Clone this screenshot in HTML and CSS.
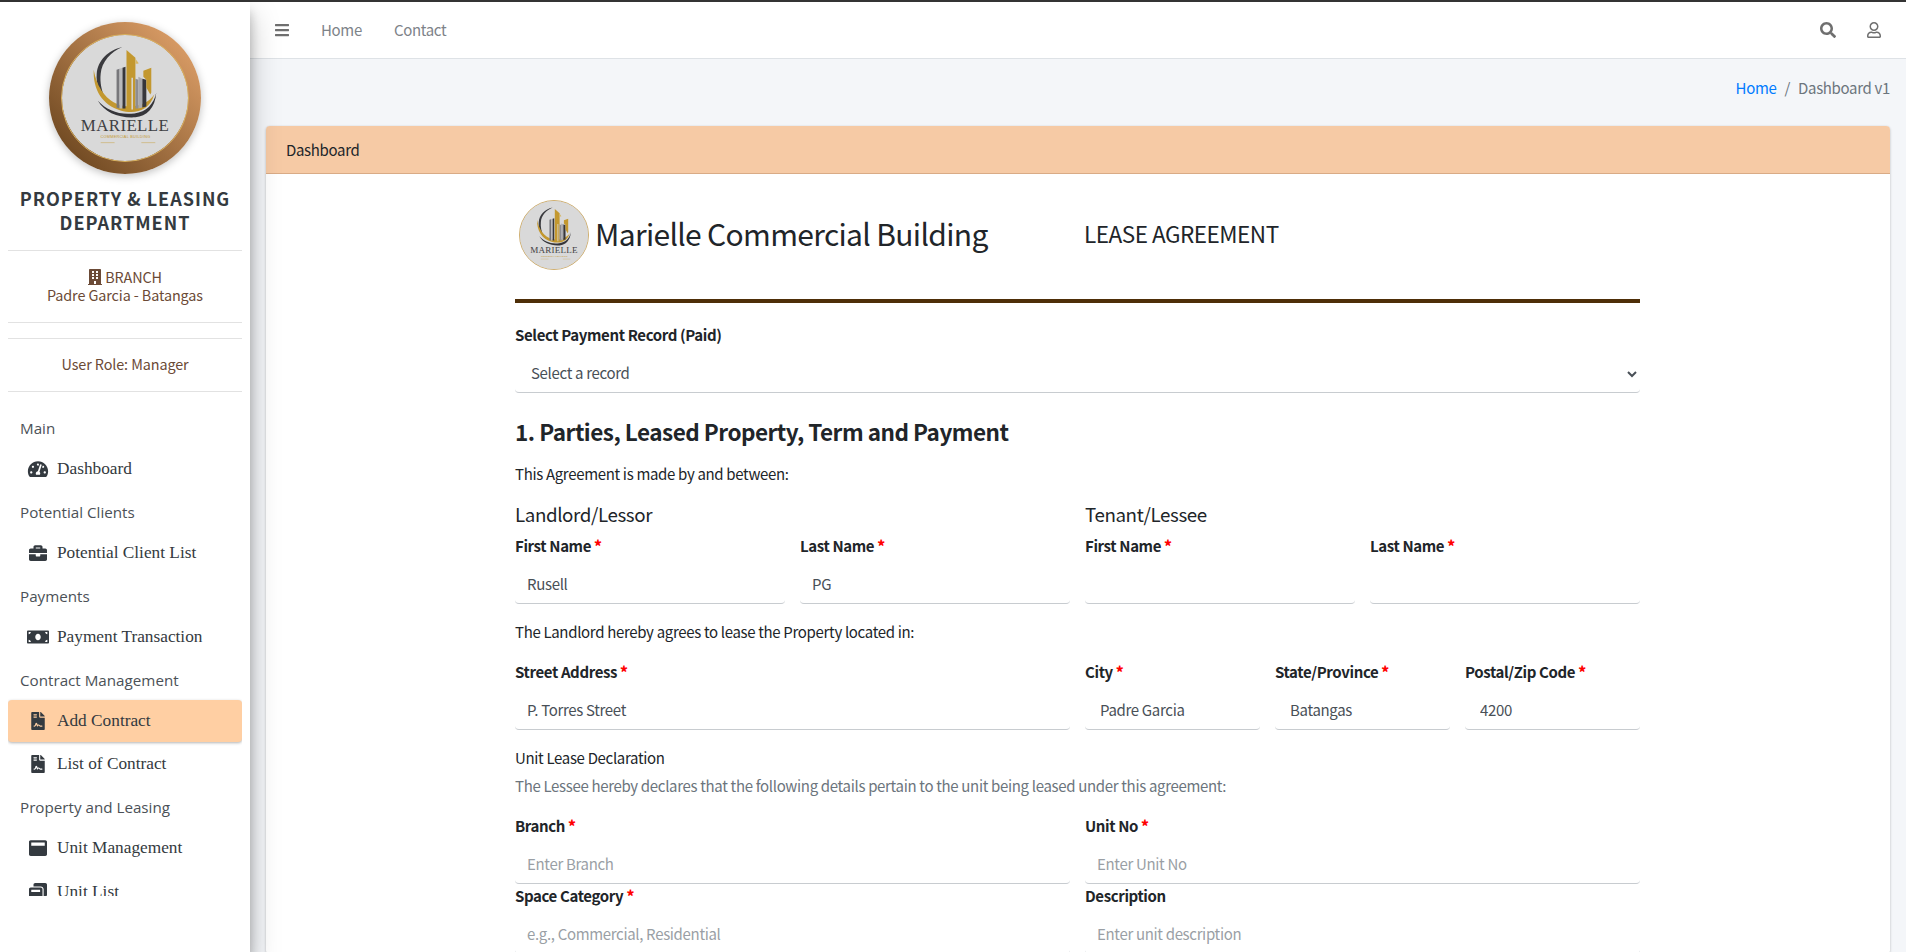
FILE: index.html
```html
<!DOCTYPE html>
<html lang="en">
<head>
  <meta charset="UTF-8">
  <meta name="viewport" content="width=device-width, initial-scale=1.0">
  <title>Lease Agreement</title>
  <link rel="stylesheet" href="styles.css">
</head>
<body>
  <svg class="icon-defs" aria-hidden="true">
    <symbol id="i-bars" viewBox="0 0 448 512"><path d="M16 132h416c8.837 0 16-7.163 16-16V76c0-8.837-7.163-16-16-16H16C7.163 60 0 67.163 0 76v40c0 8.837 7.163 16 16 16zm0 160h416c8.837 0 16-7.163 16-16v-40c0-8.837-7.163-16-16-16H16c-8.837 0-16 7.163-16 16v40c0 8.837 7.163 16 16 16zm0 160h416c8.837 0 16-7.163 16-16v-40c0-8.837-7.163-16-16-16H16c-8.837 0-16 7.163-16 16v40c0 8.837 7.163 16 16 16z"/></symbol>
    <symbol id="i-search" viewBox="0 0 512 512"><path d="M505 442.7L405.3 343c-4.5-4.5-10.6-7-17-7H372c27.6-35.3 44-79.7 44-128C416 93.1 322.9 0 208 0S0 93.1 0 208s93.1 208 208 208c48.3 0 92.7-16.4 128-44v16.3c0 6.4 2.5 12.5 7 17l99.7 99.7c9.4 9.4 24.6 9.4 33.9 0l28.3-28.3c9.4-9.4 9.4-24.6.1-34zM208 336c-70.7 0-128-57.2-128-128 0-70.7 57.2-128 128-128 70.7 0 128 57.2 128 128 0 70.7-57.2 128-128 128z"/></symbol>
    <symbol id="i-user" viewBox="0 0 448 512"><path d="M313.6 304c-28.7 0-42.5 16-89.6 16-47.1 0-60.8-16-89.6-16C60.2 304 0 364.2 0 438.4V464c0 26.5 21.5 48 48 48h352c26.5 0 48-21.5 48-48v-25.6c0-74.2-60.2-134.4-134.4-134.4zM400 464H48v-25.6c0-47.6 38.8-86.4 86.4-86.4 14.6 0 38.3 16 89.6 16 51.7 0 74.9-16 89.6-16 47.6 0 86.4 38.8 86.4 86.4V464zM224 288c79.5 0 144-64.5 144-144S303.5 0 224 0 80 64.5 80 144s64.5 144 144 144zm0-240c52.9 0 96 43.1 96 96s-43.1 96-96 96-96-43.1-96-96 43.1-96 96-96z"/></symbol>
    <symbol id="i-building" viewBox="0 0 448 512"><path d="M436 480h-20V24c0-13.255-10.745-24-24-24H56C42.745 0 32 10.745 32 24v456H12c-6.627 0-12 5.373-12 12v20h448v-20c0-6.627-5.373-12-12-12zM128 76c0-6.627 5.373-12 12-12h40c6.627 0 12 5.373 12 12v40c0 6.627-5.373 12-12 12h-40c-6.627 0-12-5.373-12-12V76zm0 96c0-6.627 5.373-12 12-12h40c6.627 0 12 5.373 12 12v40c0 6.627-5.373 12-12 12h-40c-6.627 0-12-5.373-12-12v-40zm52 148h-40c-6.627 0-12-5.373-12-12v-40c0-6.627 5.373-12 12-12h40c6.627 0 12 5.373 12 12v40c0 6.627-5.373 12-12 12zm76 160h-64v-84c0-6.627 5.373-12 12-12h40c6.627 0 12 5.373 12 12v84zm64-172c0 6.627-5.373 12-12 12h-40c-6.627 0-12-5.373-12-12v-40c0-6.627 5.373-12 12-12h40c6.627 0 12 5.373 12 12v40zm0-96c0 6.627-5.373 12-12 12h-40c-6.627 0-12-5.373-12-12v-40c0-6.627 5.373-12 12-12h40c6.627 0 12 5.373 12 12v40zm0-96c0 6.627-5.373 12-12 12h-40c-6.627 0-12-5.373-12-12V76c0-6.627 5.373-12 12-12h40c6.627 0 12 5.373 12 12v40z"/></symbol>
    <symbol id="i-gauge" viewBox="0 0 576 512"><path d="M288 32C128.94 32 0 160.94 0 320c0 52.8 14.25 102.26 39.06 144.8 5.61 9.62 16.3 15.2 27.44 15.2h443c11.14 0 21.83-5.58 27.44-15.2C561.75 422.26 576 372.8 576 320c0-159.06-128.94-288-288-288zm0 64c14.71 0 26.58 10.13 30.32 23.65-1.11 2.26-2.64 4.23-3.45 6.67l-9.22 27.67c-5.13 3.49-10.97 6.01-17.64 6.01-17.67 0-32-14.33-32-32S270.33 96 288 96zM96 384c-17.67 0-32-14.33-32-32s14.33-32 32-32 32 14.33 32 32-14.33 32-32 32zm48-160c-17.67 0-32-14.33-32-32s14.33-32 32-32 32 14.33 32 32-14.33 32-32 32zm246.77-72.41l-61.33 184C343.13 347.33 352 364.54 352 384c0 11.72-3.38 22.55-8.88 32H232.88c-5.5-9.45-8.88-20.28-8.88-32 0-33.94 26.5-61.43 59.9-63.59l61.34-184.01c4.17-12.56 17.73-19.45 30.36-15.17 12.57 4.19 19.35 17.79 15.17 30.36zm14.66 57.2l15.52-46.55c3.47-1.29 7.13-2.23 11.05-2.23 17.67 0 32 14.33 32 32s-14.33 32-32 32c-11.38-.01-20.89-6.27-26.57-15.22zM480 384c-17.67 0-32-14.33-32-32s14.33-32 32-32 32 14.33 32 32-14.33 32-32 32z"/></symbol>
    <symbol id="i-briefcase" viewBox="0 0 512 512"><path d="M320 336c0 8.84-7.16 16-16 16h-96c-8.84 0-16-7.16-16-16v-48H0v144c0 25.6 22.4 48 48 48h416c25.6 0 48-22.4 48-48V288H320v48zm144-208h-80V80c0-25.6-22.4-48-48-48H176c-25.6 0-48 22.4-48 48v48H48c-25.6 0-48 22.4-48 48v80h512v-80c0-25.6-22.4-48-48-48zm-144 0H192V96h128v32z"/></symbol>
    <symbol id="i-money" viewBox="0 0 640 512"><path d="M608 64H32C14.33 64 0 78.33 0 96v320c0 17.67 14.33 32 32 32h576c17.67 0 32-14.33 32-32V96c0-17.67-14.33-32-32-32zM48 400v-64c35.35 0 64 28.65 64 64H48zm0-224v-64h64c0 35.35-28.65 64-64 64zm272 176c-44.19 0-80-42.99-80-96 0-53.02 35.82-96 80-96s80 42.98 80 96c0 53.03-35.83 96-80 96zm272 48h-64c0-35.35 28.65-64 64-64v64zm0-224c-35.35 0-64-28.65-64-64h64v64z"/></symbol>
    <symbol id="i-contract" viewBox="0 0 384 512"><path d="M224 136V0H24C10.7 0 0 10.7 0 24v464c0 13.3 10.7 24 24 24h336c13.3 0 24-10.7 24-24V160H248c-13.2 0-24-10.8-24-24zM64 72c0-4.42 3.58-8 8-8h80c4.42 0 8 3.58 8 8v16c0 4.42-3.58 8-8 8H72c-4.42 0-8-3.58-8-8V72zm0 64c0-4.42 3.58-8 8-8h80c4.42 0 8 3.58 8 8v16c0 4.42-3.58 8-8 8H72c-4.42 0-8-3.58-8-8v-16zm192.81 248H304c8.84 0 16 7.16 16 16s-7.16 16-16 16h-47.19c-16.45 0-31.27-9.14-38.64-23.86-2.95-5.92-8.09-6.52-10.17-6.52s-7.22.59-10.02 6.19l-7.67 15.34a15.986 15.986 0 0 1-14.31 8.84c-.38 0-.75-.02-1.14-.05-6.45-.45-12-4.75-14.03-10.89L144 354.59l-10.61 31.88c-5.89 17.66-22.38 29.53-41 29.53H80c-8.84 0-16-7.16-16-16s7.16-16 16-16h12.39c4.83 0 9.11-3.08 10.64-7.66l18.19-54.64c3.3-9.81 12.44-16.41 22.78-16.41s19.48 6.59 22.77 16.41l13.88 41.64c19.77-16.19 54.05-9.7 66 14.16 2.02 4.06 5.96 6.5 10.16 6.5zM377 105L279.1 7c-4.5-4.5-10.6-7-17-7H256v128h128v-6.1c0-6.3-2.5-12.4-7-16.9z"/></symbol>
    <symbol id="i-window" viewBox="0 0 512 512"><path d="M464 32H48C21.5 32 0 53.5 0 80v352c0 26.5 21.5 48 48 48h416c26.5 0 48-21.5 48-48V80c0-26.5-21.5-48-48-48zm-16 160H64v-84c0-6.6 5.4-12 12-12h360c6.6 0 12 5.4 12 12v84z"/></symbol>
    <symbol id="i-windows" viewBox="0 0 512 512"><path d="M512 48v288c0 26.5-21.5 48-48 48h-48V176c0-44.1-35.9-80-80-80H128V48c0-26.5 21.5-48 48-48h288c26.5 0 48 21.5 48 48zM384 176v288c0 26.5-21.5 48-48 48H48c-26.5 0-48-21.5-48-48V176c0-26.5 21.5-48 48-48h288c26.5 0 48 21.5 48 48zm-68 28c0-6.6-5.4-12-12-12H76c-6.6 0-12 5.4-12 12v52h252v-52z"/></symbol>

    <!-- company mark, drawn on a 127 box -->
    <symbol id="logo-mark" viewBox="0 0 127 127">
      <circle cx="63.500" cy="63.500" r="63.500" fill="#d9d9d9"/>
      <path d="M61 12C46 15 36 26 35 39c-1 10 3 19 9 26-4-8-6-17-5-26 1-12 10-22 22-27z" fill="#3a3a3e"/>
      <path d="M32 35c-1 20 9 36 27 41 14 4 29 1 34-16-7 10-20 14-33 11C45 67 35 53 32 35z" fill="#c3982f"/>
      <path d="M36 66c7 12 21 18 38 17 11-1 20-9 21-25-2 11-10 20-22 21-15 2-28-3-37-13z" fill="#35353a"/>
      <path d="M55 35l3-1v40l-3-1z" fill="#77777b"/>
      <path d="M58 34l3-1v41h-3z" fill="#b9b9bb"/>
      <path d="M61 33l3-1v42h-3z" fill="#36363b"/>
      <path d="M65 15l9 8v52l-9 1z" fill="#c3982f"/>
      <path d="M70 43h1.500v32H70z" fill="#d9d9d9"/>
      <path d="M74 24l3 4v1h-3z" fill="#d6b767"/>
      <path d="M74 44l3 1v29h-3z" fill="#8d8d91"/>
      <path d="M77 42l4 2v29l-4 1z" fill="#a9a9ac"/>
      <path d="M81 44l4 1v27l-4 1z" fill="#36363b"/>
      <path d="M82 36l8-3v25l-1 2-4-7v-8l-3-3z" fill="#c3982f"/>
      <text x="63.500" y="97" class="logo-name">MARIELLE</text>
      <text x="64" y="104" class="logo-sub">COMMERCIAL BUILDING</text>
      <path d="M39 108.500h14M80 108.500h14" stroke="#c9aa5c" stroke-width=".6"/>
    </symbol>
  </svg>

  <div class="app">
    <aside class="sidebar">
      <div class="brand">
        <div class="brand-ring">
          <svg class="brand-mark"><use href="#logo-mark"/></svg>
        </div>
        <h2 class="brand-title">PROPERTY &amp; LEASING DEPARTMENT</h2>
      </div>
      <div class="side-info side-branch">
        <div><svg class="icon-inline"><use href="#i-building"/></svg> BRANCH</div>
        <div>Padre Garcia - Batangas</div>
      </div>
      <div class="side-info side-role">User Role: Manager</div>

      <nav class="side-nav">
        <div class="nav-heading">Main</div>
        <a class="nav-item"><svg class="nav-icon"><use href="#i-gauge"/></svg>Dashboard</a>
        <div class="nav-heading">Potential Clients</div>
        <a class="nav-item"><svg class="nav-icon"><use href="#i-briefcase"/></svg>Potential Client List</a>
        <div class="nav-heading">Payments</div>
        <a class="nav-item"><svg class="nav-icon"><use href="#i-money"/></svg>Payment Transaction</a>
        <div class="nav-heading">Contract Management</div>
        <a class="nav-item active"><svg class="nav-icon"><use href="#i-contract"/></svg>Add Contract</a>
        <a class="nav-item"><svg class="nav-icon"><use href="#i-contract"/></svg>List of Contract</a>
        <div class="nav-heading">Property and Leasing</div>
        <a class="nav-item"><svg class="nav-icon"><use href="#i-window"/></svg>Unit Management</a>
        <a class="nav-item"><svg class="nav-icon"><use href="#i-windows"/></svg>Unit List</a>
      </nav>
    </aside>

    <div class="main">
      <header class="topbar">
        <svg class="top-icon bars"><use href="#i-bars"/></svg>
        <a class="top-link">Home</a>
        <a class="top-link">Contact</a>
        <div class="top-right">
          <svg class="top-icon"><use href="#i-search"/></svg>
          <svg class="top-icon"><use href="#i-user"/></svg>
        </div>
      </header>

      <div class="content">
        <div class="breadcrumb">
          <a>Home</a><span class="crumb-sep">/</span><span class="crumb-now">Dashboard v1</span>
        </div>

        <section class="card">
          <div class="card-header">Dashboard</div>
          <div class="card-body">
            <form class="lease">
              <div class="lease-head">
                <div class="lease-logo"><svg class="lease-mark"><use href="#logo-mark"/></svg></div>
                <h1 class="lease-company">Marielle Commercial Building</h1>
                <div class="lease-title">LEASE AGREEMENT</div>
              </div>

              <label class="field-label">Select Payment Record (Paid)</label>
              <select class="field select-field">
                <option>Select a record</option>
              </select>

              <h3 class="section-title">1. Parties, Leased Property, Term and Payment</h3>
              <p class="line first-line">This Agreement is made by and between:</p>

              <div class="grid party-row">
                <div class="span-6 party-name">Landlord/Lessor</div>
                <div class="span-6 party-name">Tenant/Lessee</div>
              </div>
              <div class="grid">
                <div class="span-3"><label class="field-label">First Name <b class="req">*</b></label><input class="field" value="Rusell"></div>
                <div class="span-3"><label class="field-label">Last Name <b class="req">*</b></label><input class="field" value="PG"></div>
                <div class="span-3"><label class="field-label">First Name <b class="req">*</b></label><input class="field"></div>
                <div class="span-3"><label class="field-label">Last Name <b class="req">*</b></label><input class="field"></div>
              </div>

              <p class="line">The Landlord hereby agrees to lease the Property located in:</p>

              <div class="grid">
                <div class="span-6"><label class="field-label">Street Address <b class="req">*</b></label><input class="field" value="P. Torres Street"></div>
                <div class="span-2"><label class="field-label">City <b class="req">*</b></label><input class="field wide-pad" value="Padre Garcia"></div>
                <div class="span-2"><label class="field-label">State/Province <b class="req">*</b></label><input class="field wide-pad" value="Batangas"></div>
                <div class="span-2"><label class="field-label">Postal/Zip Code <b class="req">*</b></label><input class="field wide-pad" value="4200"></div>
              </div>

              <p class="line">Unit Lease Declaration</p>
              <p class="line note">The Lessee hereby declares that the following details pertain to the unit being leased under this agreement:</p>

              <div class="grid unit-row">
                <div class="span-6"><label class="field-label">Branch <b class="req">*</b></label><input class="field" placeholder="Enter Branch"></div>
                <div class="span-6"><label class="field-label">Unit No <b class="req">*</b></label><input class="field" placeholder="Enter Unit No"></div>
              </div>
              <div class="grid">
                <div class="span-6"><label class="field-label">Space Category <b class="req">*</b></label><input class="field" placeholder="e.g., Commercial, Residential"></div>
                <div class="span-6"><label class="field-label">Description</label><input class="field" placeholder="Enter unit description"></div>
              </div>
            </form>
          </div>
        </section>
      </div>
    </div>
  </div>
</body>
</html>
```

FILE: styles.css
```css
* {
  box-sizing: border-box;
}

html, body {
  height: 100%;
}

body {
  margin: 0;
  overflow: hidden;
  font-family: "Noto Sans CJK SC", "Open Sans", sans-serif;
  font-size: 15px;
  letter-spacing: -0.33px;
  line-height: 24px;
  color: #212529;
  background: #f4f6f9;
}

.icon-defs {
  display: none;
}

.app {
  display: flex;
  height: 100%;
  border-top: 2px solid #343434;
}

/* sidebar */
.sidebar {
  flex: 0 0 250px;
  display: flex;
  flex-direction: column;
  height: 100%;
  padding: 0 8px;
  background: #fff;
  box-shadow: 0 14px 28px rgba(0, 0, 0, 0.25), 0 10px 10px rgba(0, 0, 0, 0.22);
  position: relative;
  z-index: 5;
}

.brand {
  padding-top: 20px;
  text-align: center;
  border-bottom: 1px solid #e2e2e2;
}

.brand-ring {
  width: 152px;
  height: 152px;
  margin: 0 auto;
  padding: 12px;
  border-radius: 50%;
  background: linear-gradient(45deg, #5f3c17, #eaa970);
  box-shadow: 0 2px 8px rgba(0, 0, 0, 0.25);
}

.brand-mark {
  display: block;
  width: 128px;
  height: 128px;
  border-radius: 50%;
  border: 1px solid #d8b25f;
}

.brand-title {
  margin: 12px -4px 16px;
  font-size: 18px;
  line-height: 24px;
  font-weight: 700;
  letter-spacing: 1px;
  color: #343a40;
}

.side-info {
  text-align: center;
  color: #6b4a36;
  font-size: 14.400px;
  letter-spacing: -0.1px;
  line-height: 18px;
  border-bottom: 1px solid #e2e2e2;
}

.side-branch {
  padding: 17px 0 18px;
  margin-bottom: 15px;
}

.side-role {
  padding: 16px 0 18px;
  border-top: 1px solid #e2e2e2;
}

.icon-inline {
  display: inline-block;
  width: 14px;
  height: 16px;
  fill: #6b4a36;
  vertical-align: -2px;
}

.side-nav {
  flex: 1;
  min-height: 0;
  margin-bottom: 56px;
  overflow: hidden;
  padding-top: 13px;
}

.nav-heading {
  padding-left: 12px;
  font-family: "Open Sans", sans-serif;
  font-size: 15.200px;
  letter-spacing: 0;
  line-height: 24px;
  color: #4b5157;
  height: 24px;
  margin: 11px 0 9px;
}

.nav-item {
  display: flex;
  align-items: center;
  height: 40px;
  padding-left: 19px;
  margin-bottom: 4px;
  font-family: "Liberation Serif", serif;
  font-size: 17.300px;
  letter-spacing: 0;
  color: #343a40;
  border-radius: 4px;
}

.nav-item.active {
  height: 42px;
  margin-top: -1px;
  margin-bottom: 2px;
  background: #ffcfa3;
  box-shadow: 0 1px 3px rgba(0, 0, 0, 0.3);
}

.nav-icon {
  flex: 0 0 22px;
  width: 22px;
  height: 18px;
  margin-right: 8px;
  fill: #343a40;
}

/* top bar */
.main {
  flex: 1;
  min-width: 0;
  display: flex;
  flex-direction: column;
}

.topbar {
  flex: 0 0 57px;
  display: flex;
  align-items: center;
  padding: 0 16px 0 24px;
  background: #fff;
  border-bottom: 1px solid #dee2e6;
}

.top-icon {
  width: 16px;
  height: 16px;
  fill: #6f6f6f;
}

.bars {
  margin-right: 31px;
}

.top-link {
  margin-right: 32px;
  color: #7e8389;
}

.top-right {
  margin-left: auto;
  display: flex;
  gap: 30px;
  padding-right: 8px;
}

/* content */
.content {
  flex: 1;
  min-height: 0;
  padding: 0 16px;
  overflow: hidden;
}

.breadcrumb {
  display: flex;
  justify-content: flex-end;
  padding: 17px 0 0 0;
  height: 67px;
  color: #6c757d;
}

.breadcrumb a {
  color: #007bff;
}

.crumb-sep {
  padding: 0 8px;
}

.card {
  background: #fff;
  border-radius: 4px;
  box-shadow: 0 0 1px rgba(0, 0, 0, 0.13), 0 1px 3px rgba(0, 0, 0, 0.2);
}

.card-header {
  height: 48px;
  padding: 0 20px;
  line-height: 47px;
  background: #f6caa5;
  border-bottom: 1px solid #d9ab86;
  border-radius: 4px 4px 0 0;
}

.card-body {
  padding: 26px 0 0 249px;
}

.lease {
  width: 1125px;
}

.lease-head {
  display: flex;
  align-items: center;
  height: 103px;
  padding: 0 0 29px 4px;
  margin-bottom: 20px;
  border-bottom: 4px solid #4e2e08;
}

.lease-logo {
  flex: 0 0 70px;
  height: 70px;
  border-radius: 50%;
  border: 1px solid #cfae6e;
  background: #d9d9d9;
}

.lease-mark {
  display: block;
  width: 68px;
  height: 68px;
}

.lease-company {
  flex: 0 0 489px;
  margin: 0 0 4px 6px;
  font-size: 30px;
  letter-spacing: -0.67px;
  line-height: 40px;
  font-weight: 400;
}

.lease-title {
  margin-bottom: 4px;
  font-size: 22.500px;
  letter-spacing: -0.48px;
  line-height: 30px;
}

.field-label {
  display: block;
  height: 24px;
  margin-bottom: 8px;
  font-weight: 700;
  letter-spacing: -0.38px;
}

.req {
  color: #ff0000;
}

.field {
  display: block;
  width: 100%;
  height: 38px;
  padding: 0 12px 2px;
  border: 0;
  border-bottom: 1px solid #c8ccd0;
  border-radius: 4px;
  background: #fff;
  font-family: inherit;
  font-size: 15px;
  letter-spacing: inherit;
  color: #495057;
  outline: 0;
}

.field::placeholder {
  color: #9a9fa5;
}

.wide-pad {
  padding-left: 15px;
}

.section-title {
  margin: 24px 0 15px;
  height: 30px;
  font-size: 22.500px;
  letter-spacing: -0.5px;
  line-height: 29px;
  font-weight: 700;
}

.line {
  margin: 16px 0 0;
}

.first-line {
  margin-top: 0;
}

.note {
  margin-top: 4px;
  color: #6c757d;
}

.grid {
  display: grid;
  grid-template-columns: repeat(12, 1fr);
  column-gap: 15px;
}

.party-row {
  margin: 16px 0 8px;
}

.party-name {
  font-size: 18.750px;
  letter-spacing: -0.4px;
  line-height: 24px;
}

.line + .grid {
  margin-top: 16px;
}

.span-2 {
  grid-column: span 2;
}

.span-3 {
  grid-column: span 3;
}

.span-6 {
  grid-column: span 6;
}

/* logo lettering */
.logo-name {
  font-family: "Liberation Serif", serif;
  font-size: 17px;
  letter-spacing: 0.4px;
  text-anchor: middle;
  fill: #3f3f43;
}

.logo-sub {
  font-family: "Liberation Sans", sans-serif;
  font-size: 3.800px;
  letter-spacing: 0.3px;
  text-anchor: middle;
  fill: #c3982f;
}
```
